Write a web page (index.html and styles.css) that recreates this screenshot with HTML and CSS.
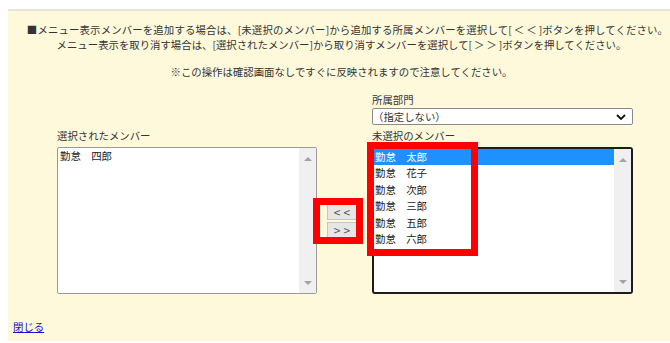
FILE: index.html
```html
<!DOCTYPE html>
<html lang="ja">
<head>
    <meta charset="UTF-8">
    <title>メニュー表示メンバー設定</title>
    <link rel="stylesheet" href="styles.css">
</head>
<body>

    <div class="page">

        <!-- 説明文 -->
        <div class="notice">
            <div class="first-line">■メニュー表示メンバーを追加する場合は、[未選択のメンバー]から追加する所属メンバーを選択して[<span class="arrows">＜＜</span>]ボタンを押してください。</div>
            <div>メニュー表示を取り消す場合は、[選択されたメンバー]から取り消すメンバーを選択して[<span class="arrows">＞＞</span>]ボタンを押してください。</div>
            <div class="caution">※この操作は確認画面なしですぐに反映されますので注意してください。</div>
        </div>

        <!-- メンバー選択 -->
        <div class="members">
            <div class="col col-left">
                <div class="label">選択されたメンバー</div>
                <div class="listbox">
                    <div class="items">
                        <div class="item">勤怠　四郎</div>
                    </div>
                    <div class="scrollbar">
                        <span class="arrow-up"></span>
                        <span class="arrow-down"></span>
                    </div>
                </div>
            </div>

            <div class="col col-mid">
                <button class="move-btn">&lt;&lt;</button>
                <button class="move-btn">&gt;&gt;</button>
            </div>

            <div class="col col-right">
                <div class="label">所属部門</div>
                <div class="dropdown">
                    <span>（指定しない）</span>
                    <svg width="10" height="6" viewBox="0 0 10 6"><path d="M1 1 L5 5 L9 1" fill="none" stroke="#111" stroke-width="1.8"/></svg>
                </div>
                <div class="label label-gap">未選択のメンバー</div>
                <div class="listbox focused">
                    <div class="items">
                        <div class="item selected">勤怠　太郎</div>
                        <div class="item">勤怠　花子</div>
                        <div class="item">勤怠　次郎</div>
                        <div class="item">勤怠　三郎</div>
                        <div class="item">勤怠　五郎</div>
                        <div class="item">勤怠　六郎</div>
                    </div>
                    <div class="scrollbar">
                        <span class="arrow-up"></span>
                        <span class="arrow-down"></span>
                    </div>
                </div>
            </div>
        </div>

        <a href="#" class="close-link">閉じる</a>

        <!-- 注目枠 -->
        <div class="mark mark-list"></div>
        <div class="mark mark-btn"></div>
    </div>

</body>
</html>
```

FILE: styles.css
```css
body {
    margin: 0;
    background: #fff;
    font-family: "Noto Sans CJK JP", "Noto Sans", sans-serif;
    font-size: 10.4px;
    color: #333;
}

.page {
    position: relative;
    margin: 9px 0 0 8px;
    border-top: 2px solid #e4e4e4;
    background: #fff9dc;
    height: 332px;
    padding-top: 11px;
    box-sizing: border-box;
}

.notice {
    text-align: center;
    line-height: 15px;
    padding-left: 5px;
}

.first-line {
    padding-left: 12px;
    letter-spacing: 0.15px;
}

.arrows {
    letter-spacing: 2px;
    padding-left: 2px;
}

.caution {
    margin-top: 12px;
}

.members {
    display: flex;
    align-items: flex-end;
    margin: 14px 0 0 49px;
}

.col-left {
    width: 260px;
}

.col-mid {
    width: 55px;
    height: 147px;
    display: flex;
    flex-direction: column;
    justify-content: center;
    align-items: flex-start;
    gap: 2px;
    padding-left: 10px;
    box-sizing: border-box;
}

.col-right {
    width: 261px;
}

.label {
    line-height: 14px;
    margin-bottom: 4px;
}

.col-right .label:first-child {
    margin-bottom: 1px;
}

.label-gap {
    margin-top: 4px;
}

.dropdown {
    height: 17px;
    box-sizing: border-box;
    border: 1px solid #8a8a8a;
    border-radius: 2px;
    background: #fff;
    display: flex;
    align-items: center;
    justify-content: space-between;
    padding: 0 6px 0 0;
    line-height: 15px;
}

.listbox {
    height: 147px;
    box-sizing: border-box;
    border: 1px solid #9a9a9a;
    border-radius: 2px;
    background: #fff;
    display: flex;
}

.listbox.focused {
    border: 2px solid #1c1c1c;
    border-radius: 3px;
}

.items {
    flex: 1;
}

.item {
    line-height: 16.4px;
    padding-left: 2px;
    color: #222;
}

.focused .item {
    padding-left: 1px;
}

.item.selected {
    background: #1e90ff;
    color: #fff;
}

.scrollbar {
    width: 17px;
    background: #f0f0f0;
    display: flex;
    flex-direction: column;
    justify-content: space-between;
    align-items: center;
    padding: 9px 0 8px;
    box-sizing: border-box;
}

.arrow-up,
.arrow-down {
    width: 0;
    height: 0;
    border-left: 4px solid transparent;
    border-right: 4px solid transparent;
}

.arrow-up {
    border-bottom: 4px solid #a3a3a3;
}

.arrow-down {
    border-top: 4px solid #a3a3a3;
}

.move-btn {
    width: 30px;
    height: 16px;
    padding: 0 0 0 3px;
    font-family: "Noto Sans CJK JP", sans-serif;
    font-size: 12px;
    line-height: 14px;
    letter-spacing: 3px;
    color: #555;
    background: #e6e6e6;
    border: 1px solid #c4c4c4;
    border-radius: 0;
}

.close-link {
    display: inline-block;
    margin: 26px 0 0 5px;
    line-height: 14px;
    color: #1a0dcc;
    text-decoration: underline;
}

/* 赤枠 */
.mark {
    position: absolute;
    border: 7px solid #ff0000;
    box-sizing: border-box;
}

.mark-list {
    left: 359px;
    top: 131px;
    width: 111px;
    height: 114px;
}

.mark-btn {
    left: 305px;
    top: 187px;
    width: 50px;
    height: 46px;
}
```
